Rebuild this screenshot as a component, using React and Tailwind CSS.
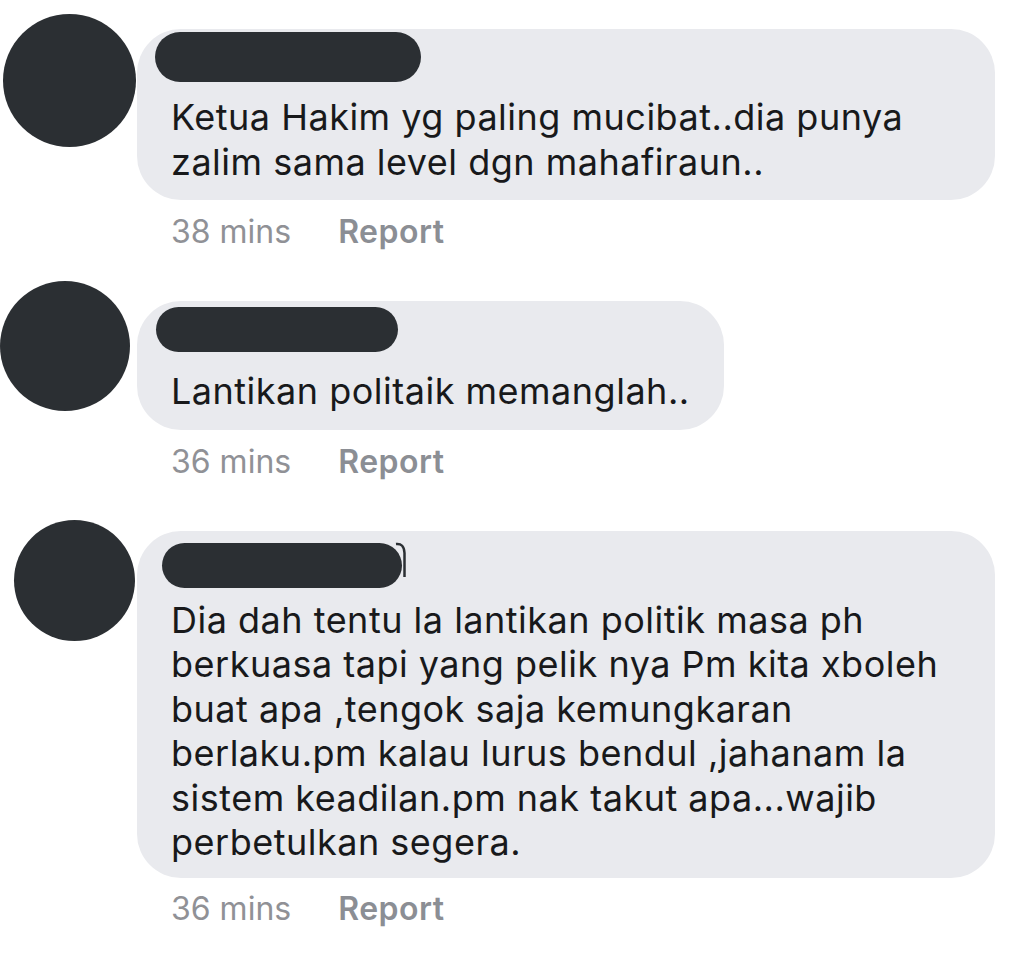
import React from 'react';

// Redacted comment thread, mobile-style bubbles
const comments = [
  {
    id: 1,
    rowClass: 'pt-[14px]',
    avatarClass: 'ml-[3px] w-[133px] h-[133px]',
    bubbleClass: 'mt-[15px] w-[858px] pt-[3px] pb-[16px]',
    barClass: 'ml-[18px] w-[266px] h-[50px]',
    textClass: 'mt-[13px]',
    lines: ['Ketua Hakim yg paling mucibat..dia punya', 'zalim sama level dgn mahafiraun..'],
    time: '38 mins',
    metaClass: 'mt-[14px]',
  },
  {
    id: 2,
    rowClass: 'mt-[31px]',
    avatarClass: 'ml-0 w-[130px] h-[130px]',
    bubbleClass: 'mt-[20px] w-fit pr-[34px] pt-[6px] pb-[16px]',
    barClass: 'ml-[19px] w-[242px] h-[45px]',
    textClass: 'mt-[17px]',
    lines: ['Lantikan politaik memanglah..'],
    time: '36 mins',
    metaClass: 'mt-[14px]',
  },
  {
    id: 3,
    rowClass: 'mt-[40px]',
    avatarClass: 'ml-[14px] w-[121px] h-[121px]',
    bubbleClass: 'mt-[11px] w-[858px] pt-[12px] pb-[13px]',
    barClass: 'ml-[25px] w-[240px] h-[45px]',
    textClass: 'mt-[10px]',
    lines: [
      'Dia dah tentu la lantikan politik masa ph',
      'berkuasa tapi yang pelik nya Pm kita xboleh',
      'buat apa ,tengok saja kemungkaran',
      'berlaku.pm kalau lurus bendul ,jahanam la',
      'sistem keadilan.pm nak takut apa...wajib',
      'perbetulkan segera.',
    ],
    time: '36 mins',
    metaClass: 'mt-[13px]',
    tail: true,
  },
];

const Comment = ({ c }) => (
  <div className={`flex items-start ${c.rowClass}`}>
    <div className="w-[137px] shrink-0">
      <div className={`rounded-full bg-[#2b2f33] ${c.avatarClass}`} />
    </div>
    <div className="flex flex-col">
      <div className={`relative rounded-[44px] bg-[#e9eaee] ${c.bubbleClass}`}>
        <div className={`rounded-full bg-[#2b2f33] ${c.barClass}`} />
        {c.tail && (
          <svg className="absolute left-[258px] top-[10px]" width="14" height="38" viewBox="0 0 14 38">
            <path d="M1 3 Q9 2 9.5 12 L9.5 36" fill="none" stroke="#2b2f33" strokeWidth="2.5" />
          </svg>
        )}
        <div className={`pl-[34px] text-[36px] leading-[44.5px] tracking-[0.5px] text-[#18191b] ${c.textClass}`}>
          {c.lines.map((l, i) => (
            <div key={i} className="whitespace-nowrap">{l}</div>
          ))}
        </div>
      </div>
      <div className={`flex pl-[34px] gap-[47px] text-[32px] leading-[36px] ${c.metaClass}`}>
        <span className="text-[#909196]">{c.time}</span>
        <span className="font-semibold tracking-[0.5px] text-[#8b8e94]">Report</span>
      </div>
    </div>
  </div>
);

export default function App() {
  return (
    <div className="min-h-screen w-[1024px] bg-white font-['Inter',sans-serif]">
      {comments.map((c) => (
        <Comment key={c.id} c={c} />
      ))}
    </div>
  );
}
